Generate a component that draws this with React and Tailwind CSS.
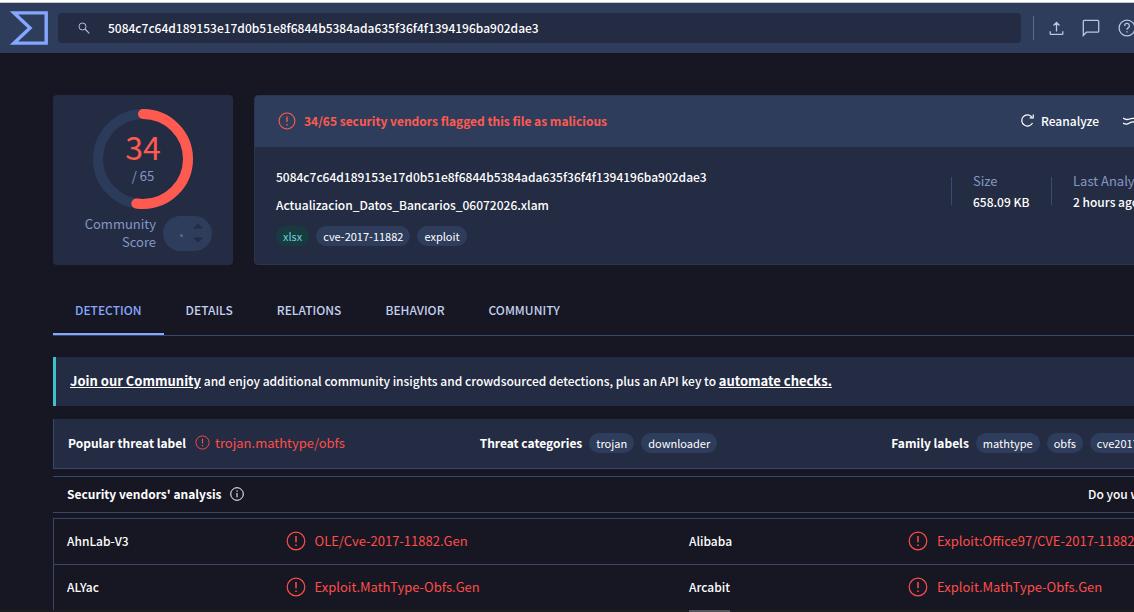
import { useState } from "react";

const HASH = "5084c7c64d189153e17d0b51e8f6844b5384ada635f36f4f1394196ba902dae3";

const TABS = ["DETECTION", "DETAILS", "RELATIONS", "BEHAVIOR", "COMMUNITY"];

const THREATS = [
    { title: "Threat categories", tags: ["trojan", "downloader"] },
    { title: "Family labels", tags: ["mathtype", "obfs", "cve201711882"] },
];

const VENDORS = [
    [
        { name: "AhnLab-V3", result: "OLE/Cve-2017-11882.Gen" },
        { name: "Alibaba", result: "Exploit:Office97/CVE-2017-11882.b" },
    ],
    [
        { name: "ALYac", result: "Exploit.MathType-Obfs.Gen" },
        { name: "Arcabit", result: "Exploit.MathType-Obfs.Gen" },
    ],
];

function AlertIcon({ className }) {
    return (
        <svg viewBox="0 0 20 20" className={className} fill="none" stroke="currentColor" strokeWidth="1.2" aria-hidden="true">
            <circle cx="10" cy="10" r="8.8" />
            <path d="M10 5v6.2M10 13.4v1.6" strokeWidth="1.5" />
        </svg>
    );
}

function Tag({ children, green }) {
    return (
        <span
            className={
                green
                    ? "rounded-full bg-[#173b3f] px-[7px] text-[11px] leading-5 font-normal text-[#6fd0dc]"
                    : "rounded-full bg-[#2f3d5c] px-[7px] text-[11px] leading-5 font-normal text-white"
            }
        >
            {children}
        </span>
    );
}

function Header() {
    const [query, setQuery] = useState(HASH);

    return (
        <header className="flex h-[50px] shrink-0 items-center bg-[#2f3d5c]">
            <a href="#home" aria-label="Home" className="ml-[10px]">
                <svg viewBox="0 0 38 34" className="h-[34px] w-[38px]" fill="none" stroke="#85a7ff" strokeWidth="3.4" aria-hidden="true">
                    <path d="M4 1.9H36.2V32.1H4L20 17Z" />
                </svg>
            </a>
            <label className="ml-[10px] flex h-[30px] flex-1 items-center rounded bg-[#242c43] pl-5">
                <svg viewBox="0 0 12 12" className="h-3 w-3 text-[#b4c0dc]" fill="none" stroke="currentColor" aria-hidden="true">
                    <circle cx="4.5" cy="4.5" r="3.5" />
                    <path d="M7 7l4.3 4.3" strokeWidth="1.2" />
                </svg>
                <input
                    aria-label="Search"
                    value={query}
                    onChange={(e) => setQuery(e.target.value)}
                    className="ml-[18px] flex-1 bg-transparent text-xs font-medium text-white outline-none"
                />
            </label>
            <div className="flex w-[331px] items-center pl-3 text-[#b9c6e4]">
                <div className="h-6 w-px bg-[#5a6b99]" />
                <button aria-label="Upload" className="ml-[15px]">
                    <svg viewBox="0 0 15 16" className="h-4 w-[15px]" fill="none" stroke="currentColor" strokeWidth="1.3" aria-hidden="true">
                        <path d="M7.5 11.5V2.5M4.5 5.5l3-3 3 3M1.2 11.2v2.5q0 .6.6.6h11.4q.6 0 .6-.6v-2.5" />
                    </svg>
                </button>
                <button aria-label="Notifications" className="ml-[18px]">
                    <svg viewBox="0 0 18 18" className="h-[18px] w-[18px]" fill="none" stroke="currentColor" strokeWidth="1.3" aria-hidden="true">
                        <path d="M1.3 16.5V2.3q0-.9.9-.9h13.6q.9 0 .9.9v10q0 .9-.9.9H4.4z" />
                    </svg>
                </button>
                <button aria-label="Help" className="ml-[18px]">
                    <svg viewBox="0 0 18 18" className="h-[18px] w-[18px]" fill="none" stroke="currentColor" strokeWidth="1.3" aria-hidden="true">
                        <circle cx="9" cy="9" r="7.9" />
                        <path d="M6.6 6.9a2.4 2.4 0 1 1 3.6 2c-.8.5-1.2.8-1.2 1.8M9 12.2v1.4" />
                    </svg>
                </button>
            </div>
        </header>
    );
}

function ScoreCard({ detections, total }) {
    const length = 2 * Math.PI * 45;

    return (
        <section className="flex h-[170px] w-[180px] shrink-0 flex-col items-center rounded bg-[#242c43] pt-[14px]">
            <div className="relative">
                <svg viewBox="0 0 100 100" className="h-[100px] w-[100px] -rotate-90" fill="none" strokeWidth="10" aria-hidden="true">
                    <circle cx="50" cy="50" r="45" stroke="#2d3b5a" />
                    <circle
                        cx="50"
                        cy="50"
                        r="45"
                        stroke="#ff5a50"
                        strokeLinecap="round"
                        strokeDasharray={`${(length * detections) / total} ${length}`}
                    />
                </svg>
                <div className="absolute inset-0 flex flex-col items-center pt-4">
                    <span className="text-[32px] leading-[42px] text-[#ff5a50]">{detections}</span>
                    <span className="leading-[18px] text-[#8497c4]">/ {total}</span>
                </div>
            </div>
            <div className="mt-[6px] mr-[21px] flex items-center gap-[7px] self-end">
                <p className="text-right leading-[18px] text-[#8497c4]">
                    Community
                    <br />
                    Score
                </p>
                <div className="flex h-[35px] w-[49px] items-center justify-end gap-[10px] rounded-full bg-[#2f3d5c] pr-[9px]">
                    <span className="mt-1 h-[3px] w-[3px] rounded-full bg-[#5c6a87]" />
                    <svg viewBox="0 0 10 20" className="h-5 w-[10px]" fill="#242c43" aria-hidden="true">
                        <path d="M0 5.5L5 .5l5 5zM0 14.5h10l-5 5z" />
                    </svg>
                </div>
            </div>
        </section>
    );
}

function FileCard() {
    return (
        <section className="flex h-[170px] flex-1 flex-col overflow-hidden rounded border border-[#2a3550] bg-[#242c43]">
            <div className="flex h-[51px] items-center bg-[#2f3d5c] pb-[2px] pl-[23px]">
                <AlertIcon className="h-[18px] w-[18px] text-[#ff5a50]" />
                <p className="ml-2 text-xs font-bold text-[#ff5a50]">34/65 security vendors flagged this file as malicious</p>
                <div className="ml-auto flex w-[277px] items-center text-xs font-medium text-white">
                    <button className="flex items-center gap-[7px]">
                        <svg viewBox="0 0 12 12" className="h-[13px] w-[13px]" fill="none" stroke="currentColor" strokeWidth="1.1" aria-hidden="true">
                            <path d="M10.6 8.3A5.2 5.2 0 1 1 10 2.7M11.3.4v3.2H8" />
                        </svg>
                        Reanalyze
                    </button>
                    <button className="ml-6 flex items-center gap-2">
                        <svg viewBox="0 0 14 10" className="h-[10px] w-[14px]" fill="none" stroke="currentColor" strokeWidth="1.3" aria-hidden="true">
                            <path d="M0 2q3 2.4 6.5 1t6.5 0M0 7q3 2.4 6.5 0t6.5 0" />
                        </svg>
                        Similar
                    </button>
                </div>
            </div>
            <div className="flex items-start">
                <div className="flex flex-col gap-2 pt-5 pl-[21px] text-xs font-medium text-white">
                    <p className="leading-5">{HASH}</p>
                    <p className="leading-5">Actualizacion_Datos_Bancarios_06072026.xlam</p>
                    <div className="mt-[3px] flex gap-[7px]">
                        <Tag green>xlsx</Tag>
                        <Tag>cve-2017-11882</Tag>
                        <Tag>exploit</Tag>
                    </div>
                </div>
                <dl className="mt-[23px] ml-auto flex w-[347px] items-center">
                    <div className="flex w-[100px] items-center gap-[21px]">
                        <span className="h-7 w-px bg-[#3a4a72]" />
                        <div>
                            <dt className="leading-[21px] text-[#8497c4]">Size</dt>
                            <dd className="text-xs leading-[21px] font-medium text-white">658.09 KB</dd>
                        </div>
                    </div>
                    <div className="flex items-center gap-[21px]">
                        <span className="h-7 w-px bg-[#3a4a72]" />
                        <div>
                            <dt className="leading-[21px] text-[#8497c4]">Last Analysis Date</dt>
                            <dd className="text-xs leading-[21px] font-medium text-white">2 hours ago</dd>
                        </div>
                    </div>
                </dl>
            </div>
        </section>
    );
}

function Tabs() {
    const [active, setActive] = useState("DETECTION");

    return (
        <nav className="mt-[21px] flex h-[50px] border-b border-[#37466b] text-xs font-medium">
            {TABS.map((tab) => (
                <button
                    key={tab}
                    onClick={() => setActive(tab)}
                    className={
                        tab === active
                            ? "border-b-2 border-[#85a7ff] px-[22px] text-[#85a7ff]"
                            : "border-b-2 border-transparent px-[22px] text-[#c3d0ef]"
                    }
                >
                    {tab}
                </button>
            ))}
        </nav>
    );
}

export default function App() {
    return (
        <div className="flex h-screen flex-col overflow-hidden bg-[#171723] font-['Noto_Sans_CJK_SC','Source_Sans_3',sans-serif] text-[13px] whitespace-nowrap">
            <div className="h-[3px] shrink-0 border-b border-[#c9c9cc] bg-white" />
            <div className="flex min-h-0 w-full min-w-[1352px] flex-1 flex-col overflow-hidden">
                <Header />
                <main className="px-[53px] pt-[42px]">
                    <div className="flex gap-[21px]">
                        <ScoreCard detections={34} total={65} />
                        <FileCard />
                    </div>

                    <Tabs />

                    <p className="mt-[21px] border-l-[3px] border-[#3fc1c9] bg-[#242c43] pb-[2px] pl-[14px] text-xs leading-[47px] font-medium text-white">
                        <a href="#join" className="text-[13px] font-bold underline">Join our Community</a> and enjoy additional community insights and crowdsourced detections, plus an API key to{" "}
                        <a href="#automate" className="text-[13px] font-bold underline">automate checks.</a>
                    </p>

                    {/* Threat summary */}
                    <div className="mt-[13px] grid h-[50px] grid-cols-3 items-center border-b border-l border-[#37466b] bg-[#242c43] pr-[10px] pb-[2px] text-white">
                        <div className="flex items-center pl-[14px]">
                            <span className="text-xs font-bold">Popular threat label</span>
                            <AlertIcon className="ml-[9px] h-[15px] w-[15px] text-[#ff4d4a]" />
                            <span className="ml-[5px] text-[#ff4d4a]">trojan.mathtype/obfs</span>
                        </div>
                        {THREATS.map(({ title, tags }) => (
                            <div key={title} className="flex items-center gap-[7px] pl-[14px]">
                                <span className="text-xs font-bold">{title}</span>
                                {tags.map((tag) => (
                                    <Tag key={tag}>{tag}</Tag>
                                ))}
                            </div>
                        ))}
                    </div>

                    <div className="mt-[7px] flex h-[37px] items-center border-y border-[#37466b] pb-[2px] pl-[14px] text-xs text-white">
                        <h2 className="font-bold">Security vendors' analysis</h2>
                        <svg viewBox="0 0 14 14" className="ml-[9px] h-[14px] w-[14px]" fill="none" stroke="currentColor" aria-hidden="true">
                            <circle cx="7" cy="7" r="6.3" />
                            <path d="M7 6v4.3M7 3.4v1.4" />
                        </svg>
                        <a href="#automate" className="ml-auto w-[211px] font-medium">Do you want to automate checks?</a>
                    </div>

                    <table className="mt-[5px] w-full table-fixed border border-[#37466b]">
                        <tbody>
                            {VENDORS.map((row) => (
                                <tr key={row[0].name} className="h-[46px] border-b border-[#37466b]">
                                    {row.flatMap(({ name, result }) => [
                                        <th key={name} className="w-[220px] pb-[2px] pl-[13px] text-left text-xs font-medium text-white">{name}</th>,
                                        <td key={name + "-result"} className="pb-[2px] pl-[12px] text-[#ff4d4a]">
                                            <div className="flex items-center gap-[9px]">
                                                <AlertIcon className="h-5 w-5" />
                                                {result}
                                            </div>
                                        </td>,
                                    ])}
                                </tr>
                            ))}
                        </tbody>
                    </table>
                </main>
            </div>
            <footer className="flex h-[2px] shrink-0 bg-[#1d1c22]">
                <div className="ml-[689px] w-[41px] bg-[#555557]" />
            </footer>
        </div>
    );
}
